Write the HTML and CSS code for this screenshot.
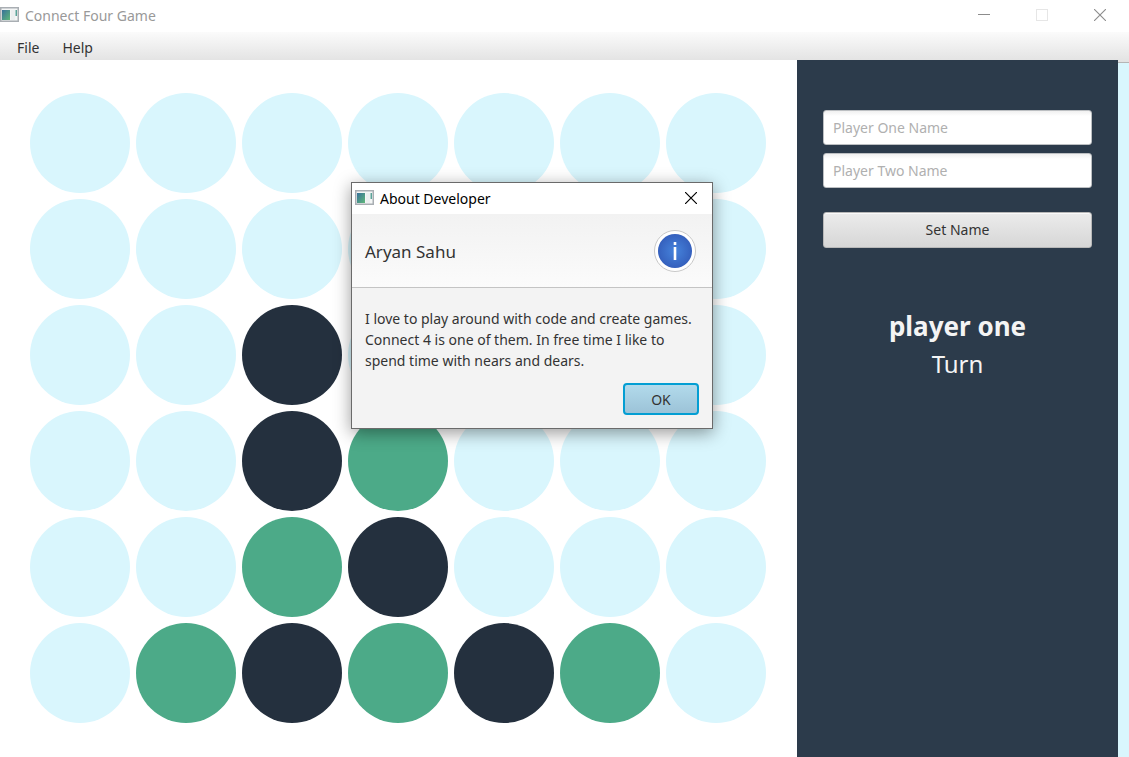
FILE: index.html
```html
<!DOCTYPE html>
<html lang="en">
<head>
<meta charset="utf-8">
<title>Connect Four Game</title>
<link rel="stylesheet" href="styles.css">
</head>
<body>
<div class="window">
  <header class="titlebar">
    <svg class="app-icon" width="20" height="16" viewBox="0 0 20 16" aria-hidden="true">
      <defs><linearGradient id="ic" x1="0" y1="0" x2="1" y2="1"><stop offset="0" stop-color="#38709a"/><stop offset="1" stop-color="#5fb87a"/></linearGradient></defs>
      <rect x="0.75" y="0.75" width="17.5" height="13.5" fill="#f4f6f6" stroke="#a9aeb3" stroke-width="1.5"/>
      <rect x="2" y="3" width="8" height="10" fill="url(#ic)"/>
      <rect x="11" y="3" width="4" height="10" fill="#eceff0"/>
      <rect x="15.5" y="3" width="1.5" height="6" fill="#5ba399"/>
    </svg>
    <h1 class="title">Connect Four Game</h1>
    <div class="controls">
      <button class="control" aria-label="Minimize"><svg width="12" height="12" viewBox="0 0 12 12"><path d="M0 5.5H12" stroke="#8c8c8c"/></svg></button>
      <button class="control" aria-label="Maximize" disabled><svg width="12" height="12" viewBox="0 0 12 12"><rect x="0.5" y="0.5" width="11" height="11" fill="none" stroke="#e6e6e6"/></svg></button>
      <button class="control" aria-label="Close"><svg width="12" height="12" viewBox="0 0 12 12"><path d="M0 0L12 12M12 0L0 12" stroke="#8c8c8c" stroke-width="1.1"/></svg></button>
    </div>
  </header>
  <nav class="menubar">
    <button class="menu">File</button>
    <button class="menu">Help</button>
  </nav>
  <main class="content">
    <section class="board" aria-label="Board">
      <span class="slot"></span><span class="slot"></span><span class="slot"></span><span class="slot"></span><span class="slot"></span><span class="slot"></span><span class="slot"></span>
      <span class="slot"></span><span class="slot"></span><span class="slot"></span><span class="slot"></span><span class="slot"></span><span class="slot"></span><span class="slot"></span>
      <span class="slot"></span><span class="slot"></span><span class="slot one"></span><span class="slot"></span><span class="slot"></span><span class="slot"></span><span class="slot"></span>
      <span class="slot"></span><span class="slot"></span><span class="slot one"></span><span class="slot two"></span><span class="slot"></span><span class="slot"></span><span class="slot"></span>
      <span class="slot"></span><span class="slot"></span><span class="slot two"></span><span class="slot one"></span><span class="slot"></span><span class="slot"></span><span class="slot"></span>
      <span class="slot"></span><span class="slot two"></span><span class="slot one"></span><span class="slot two"></span><span class="slot one"></span><span class="slot two"></span><span class="slot"></span>
    </section>
    <aside class="panel">
      <form class="names">
        <input class="field" type="text" placeholder="Player One Name" aria-label="Player One Name">
        <input class="field" type="text" placeholder="Player Two Name" aria-label="Player Two Name">
        <button class="set-name" type="button">Set Name</button>
      </form>
      <p class="player">player one</p>
      <p class="turn">Turn</p>
    </aside>
  </main>
</div>
<div class="dialog" role="dialog" aria-labelledby="dialog-title">
  <div class="dialog-bar">
    <svg class="app-icon" width="20" height="16" viewBox="0 0 20 16" aria-hidden="true">
      <rect x="0.75" y="0.75" width="17.5" height="13.5" fill="#f4f6f6" stroke="#a9aeb3" stroke-width="1.5"/>
      <rect x="2" y="3" width="8" height="10" fill="url(#ic)"/>
      <rect x="11" y="3" width="4" height="10" fill="#eceff0"/>
      <rect x="15.5" y="3" width="1.5" height="6" fill="#5ba399"/>
    </svg>
    <h2 class="dialog-title" id="dialog-title">About Developer</h2>
    <button class="dialog-close" aria-label="Close dialog"><svg width="12" height="12" viewBox="0 0 12 12"><path d="M0 0L12 12M12 0L0 12" stroke="#000" stroke-width="1.2"/></svg></button>
  </div>
  <div class="dialog-head">
    <p class="dialog-name">Aryan Sahu</p>
    <svg width="42" height="42" viewBox="0 0 42 42" role="img" aria-label="Information">
      <defs><radialGradient id="info"><stop offset="0" stop-color="#4684dc"/><stop offset="1" stop-color="#3560bd"/></radialGradient></defs>
      <circle cx="21" cy="21" r="20.5" fill="#fff" stroke="#c8c8c8"/>
      <circle cx="21" cy="21" r="17" fill="url(#info)"/>
      <rect x="19.7" y="12" width="2.6" height="3" fill="#fff"/>
      <rect x="19.7" y="17" width="2.6" height="13" fill="#fff"/>
    </svg>
  </div>
  <div class="dialog-body">
    <p class="message">I love to play around with code and create games. Connect 4 is one of them. In free time I like to spend time with nears and dears.</p>
    <button class="ok">OK</button>
  </div>
</div>
</body>
</html>
```
FILE: styles.css
```css
* { box-sizing: border-box; }

body {
  margin: 0;
  color: #333;
  font: 14px/21px "Noto Sans", "Open Sans", sans-serif;
}

h1, h2, p { margin: 0; font-weight: 400; }

button, input { font: inherit; color: inherit; }

button { padding: 0; border: 0; background: none; }

.window {
  display: flex;
  flex-direction: column;
  min-height: 100vh;
  background: #fff;
}

.titlebar {
  display: flex;
  align-items: center;
  gap: 5px;
  height: 32px;
  padding-bottom: 2px;
}

.app-icon { flex: none; }

.title { color: #999; font-size: 14px; }

.controls { display: flex; margin-left: auto; }

.control {
  display: grid;
  place-items: center;
  width: 58px;
  height: 30px;
}

.menubar {
  display: flex;
  gap: 23px;
  height: 31px;
  padding: 1px 17px 0;
  border-bottom: 1px solid #b5b5b5;
  background: linear-gradient(#fbfbfb, #e2e2e2);
}

.content {
  position: relative;
  display: flex;
  flex: 1;
  margin-top: -3px;
}

.board {
  display: grid;
  flex: none;
  grid-template-columns: repeat(7, 100px);
  grid-auto-rows: 100px;
  align-content: start;
  gap: 6px;
  padding: 33px 31px 33px 30px;
  background: #fff;
}

.slot { border-radius: 50%; background: #d9f6fd; }
.one { background: #24303e; }
.two { background: #4caa88; }

.panel {
  flex: 1;
  padding: 50px 26px;
  background: #2c3b4b;
  color: #f4f4f4;
  text-align: center;
}

.content::after {
  content: "";
  width: 11px;
  margin-top: 3px;
  background: #d9f6fd;
}

.names { display: flex; flex-direction: column; gap: 8px; }

.field {
  width: 100%;
  height: 35px;
  padding: 0 9px;
  border: 1px solid #bcbfc2;
  border-radius: 3px;
  background: linear-gradient(#f0f0f0, #fff 5px);
  color: #333;
}

.field::placeholder { color: #b0b0b0; opacity: 1; }

.set-name {
  height: 36px;
  margin-top: 16px;
  padding-bottom: 2px;
  border: 1px solid #b8b8b8;
  border-radius: 3px;
  background: linear-gradient(#ececec, #d6d6d6);
  box-shadow: inset 0 1px #fafafa;
  color: #333;
}

.player {
  margin-top: 59px;
  font-size: 26px;
  font-weight: 700;
  line-height: 38px;
}

.turn { font-size: 24px; line-height: 38px; }

.dialog {
  position: absolute;
  top: 182px;
  left: 351px;
  width: 362px;
  border: 1px solid #6a6a6a;
  background: #f3f3f3;
  box-shadow: 0 4px 16px rgba(0, 0, 0, 0.4);
}

.dialog-bar {
  display: flex;
  align-items: center;
  gap: 5px;
  height: 31px;
  padding: 0 15px 1px 3px;
  background: #fff;
}

.dialog-title { color: #000; font-size: 14px; }

.dialog-close {
  display: grid;
  place-items: center;
  margin-left: auto;
}

.dialog-head {
  display: flex;
  align-items: center;
  justify-content: space-between;
  padding: 16px 16px 15px 13px;
  border-bottom: 1px solid #c4c4c4;
  background: linear-gradient(#f2f2f2, #fbfbfb);
}

.dialog-name { font-size: 17px; }

.dialog-body {
  display: flex;
  flex-direction: column;
  gap: 12px;
  padding: 20px 13px 13px;
}

.ok {
  align-self: flex-end;
  width: 76px;
  height: 32px;
  border: 2px solid #039ed3;
  border-radius: 4px;
  background: linear-gradient(#b2daeb, #9cc3d8);
}
```
